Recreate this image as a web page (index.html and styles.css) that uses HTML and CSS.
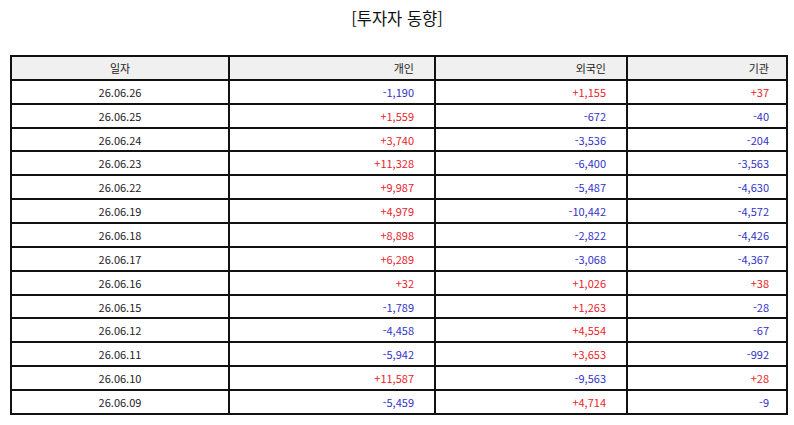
FILE: index.html
```html
<!DOCTYPE html>
<html lang="ko">
<head>
<meta charset="utf-8">
<link rel="stylesheet" href="styles.css">
</head>
<body>
<div class="page">
  <h1 class="title">[투자자 동향]</h1>
  <table class="grid">
    <colgroup>
      <col class="c-date"><col class="c-ind"><col class="c-for"><col class="c-inst">
    </colgroup>
    <thead>
      <tr><th class="ctr">일자</th><th>개인</th><th>외국인</th><th>기관</th></tr>
    </thead>
    <tbody>
      <tr><td class="ctr">26.06.26</td><td class="neg">-1,190</td><td class="pos">+1,155</td><td class="pos">+37</td></tr>
      <tr><td class="ctr">26.06.25</td><td class="pos">+1,559</td><td class="neg">-672</td><td class="neg">-40</td></tr>
      <tr><td class="ctr">26.06.24</td><td class="pos">+3,740</td><td class="neg">-3,536</td><td class="neg">-204</td></tr>
      <tr><td class="ctr">26.06.23</td><td class="pos">+11,328</td><td class="neg">-6,400</td><td class="neg">-3,563</td></tr>
      <tr><td class="ctr">26.06.22</td><td class="pos">+9,987</td><td class="neg">-5,487</td><td class="neg">-4,630</td></tr>
      <tr><td class="ctr">26.06.19</td><td class="pos">+4,979</td><td class="neg">-10,442</td><td class="neg">-4,572</td></tr>
      <tr><td class="ctr">26.06.18</td><td class="pos">+8,898</td><td class="neg">-2,822</td><td class="neg">-4,426</td></tr>
      <tr><td class="ctr">26.06.17</td><td class="pos">+6,289</td><td class="neg">-3,068</td><td class="neg">-4,367</td></tr>
      <tr><td class="ctr">26.06.16</td><td class="pos">+32</td><td class="pos">+1,026</td><td class="pos">+38</td></tr>
      <tr><td class="ctr">26.06.15</td><td class="neg">-1,789</td><td class="pos">+1,263</td><td class="neg">-28</td></tr>
      <tr><td class="ctr">26.06.12</td><td class="neg">-4,458</td><td class="pos">+4,554</td><td class="neg">-67</td></tr>
      <tr><td class="ctr">26.06.11</td><td class="neg">-5,942</td><td class="pos">+3,653</td><td class="neg">-992</td></tr>
      <tr><td class="ctr">26.06.10</td><td class="pos">+11,587</td><td class="neg">-9,563</td><td class="pos">+28</td></tr>
      <tr><td class="ctr">26.06.09</td><td class="neg">-5,459</td><td class="pos">+4,714</td><td class="neg">-9</td></tr>
    </tbody>
  </table>
</div>
</body>
</html>
```

FILE: styles.css
```css
html, body {
  margin: 0;
  padding: 0;
  background: #ffffff;
}

.page {
  width: 794px;
  height: 425px;
  padding-top: 6px;
  box-sizing: border-box;
  font-family: "Noto Sans CJK KR", "Noto Sans", sans-serif;
  color: #222;
}

.title {
  margin: 0 0 19px 0;
  height: 30px;
  line-height: 24px;
  text-align: center;
  font-size: 16.5px;
  font-weight: 400;
  color: #111;
}

.grid {
  margin-left: 10px;
  width: 776px;
  border-collapse: collapse;
  table-layout: fixed;
  font-size: 11px;
}

.c-date { width: 218px; }
.c-ind { width: 206px; }
.c-for { width: 192px; }
.c-inst { width: 160px; }

.grid th,
.grid td {
  border: 2px solid #111;
  height: 21.87px;
  padding: 0;
  text-align: right;
  font-weight: 400;
  color: #222;
  line-height: 14px;
}

.grid th { background: #f0f0f0; }

.grid th:nth-child(2), .grid td:nth-child(2) { padding-right: 20px; }
.grid th:nth-child(3), .grid td:nth-child(3) { padding-right: 20px; }
.grid th:nth-child(4), .grid td:nth-child(4) { padding-right: 17px; }

.grid .ctr { text-align: center; padding-right: 0; }

.grid td.pos { color: #e8232b; }
.grid td.neg { color: #3232c8; }
```
